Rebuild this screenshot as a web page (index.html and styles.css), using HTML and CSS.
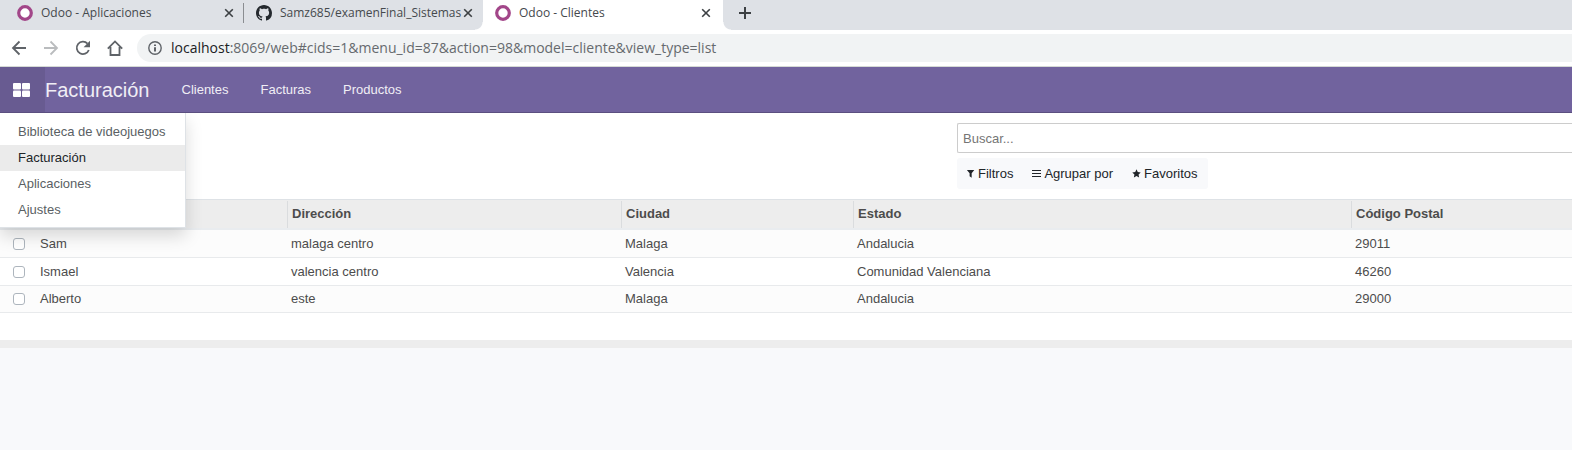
FILE: index.html
```html
<!DOCTYPE html>
<html lang="es">
<head>
<meta charset="utf-8">
<title>Odoo - Clientes</title>
<link rel="stylesheet" href="styles.css">
</head>
<body>
<header class="browser">
  <div class="tabs">
    <div class="tab tab-divided">
      <svg class="favicon" viewBox="0 0 16 16"><circle cx="8" cy="8" r="6.300" fill="#fff" stroke="#a24689" stroke-width="3.200"/></svg>
      <span class="tab-title">Odoo - Aplicaciones</span>
      <button class="tab-close" aria-label="Cerrar"><svg viewBox="0 0 10 10"><path d="M1.2 1.2 8.8 8.8M8.8 1.2 1.2 8.8"/></svg></button>
    </div>
    <div class="tab">
      <svg class="favicon" viewBox="0 0 16 16"><path fill="#24292e" d="M8 0C3.58 0 0 3.58 0 8c0 3.54 2.29 6.53 5.47 7.59.4.07.55-.17.55-.38 0-.19-.01-.82-.01-1.49-2.01.37-2.53-.49-2.69-.94-.09-.23-.48-.94-.82-1.13-.28-.15-.68-.52-.01-.53.63-.01 1.08.58 1.23.82.72 1.21 1.87.87 2.33.66.07-.52.28-.87.51-1.07-1.78-.2-3.64-.89-3.64-3.95 0-.87.31-1.59.82-2.15-.08-.2-.36-1.02.08-2.12 0 0 .67-.21 2.2.82.64-.18 1.32-.27 2-.27s1.36.09 2 .27c1.53-1.04 2.2-.82 2.2-.82.44 1.1.16 1.92.08 2.12.51.56.82 1.27.82 2.15 0 3.07-1.87 3.75-3.65 3.95.29.25.54.73.54 1.48 0 1.07-.01 1.93-.01 2.2 0 .21.15.46.55.38A8.01 8.01 0 0 0 16 8c0-4.42-3.58-8-8-8z"/></svg>
      <span class="tab-title">Samz685/examenFinal_Sistemas</span>
      <button class="tab-close" aria-label="Cerrar"><svg viewBox="0 0 10 10"><path d="M1.2 1.2 8.8 8.8M8.8 1.2 1.2 8.8"/></svg></button>
    </div>
    <div class="tab tab-active">
      <svg class="favicon" viewBox="0 0 16 16"><circle cx="8" cy="8" r="6.300" fill="#fff" stroke="#a24689" stroke-width="3.200"/></svg>
      <span class="tab-title">Odoo - Clientes</span>
      <button class="tab-close" aria-label="Cerrar"><svg viewBox="0 0 10 10"><path d="M1.2 1.2 8.8 8.8M8.8 1.2 1.2 8.8"/></svg></button>
    </div>
    <button class="tab-new" aria-label="Nueva pestaña"><svg viewBox="0 0 12 12"><path d="M6 0v12M0 6h12"/></svg></button>
  </div>
  <div class="toolbar">
    <button class="tool" aria-label="Atrás"><svg viewBox="0 0 16 16"><path d="M15 8H2M8.500 1.500 2 8l6.500 6.500"/></svg></button>
    <button class="tool tool-off" aria-label="Adelante" disabled><svg viewBox="0 0 16 16"><path d="M1 8h13M7.500 1.500 14 8l-6.500 6.500"/></svg></button>
    <button class="tool" aria-label="Recargar"><svg viewBox="0 0 16 16"><path d="M13.800 10A6.200 6.200 0 1 1 12.500 3.600"/><path class="solid" d="M15 .8v6.400H8.600z"/></svg></button>
    <button class="tool" aria-label="Inicio"><svg viewBox="0 0 16 16"><path d="M.8 8.600 8 1.400l7.200 7.200M3.500 7v8h9V7"/></svg></button>
    <div class="address">
      <svg class="info" viewBox="0 0 14 14"><circle cx="7" cy="7" r="6.200"/><path d="M7 6.200v4.300M7 3.500v1.600"/></svg>
      <div class="url"><span class="host">localhost</span>:8069/web#cids=1&amp;menu_id=87&amp;action=98&amp;model=cliente&amp;view_type=list</div>
    </div>
  </div>
</header>
<nav class="navbar">
  <div class="apps">
    <button class="apps-toggle" aria-label="Aplicaciones" aria-expanded="true"><svg viewBox="0 0 17 14"><rect width="8" height="6.500" rx="1"/><rect x="9" width="8" height="6.500" rx="1"/><rect y="7.500" width="8" height="6.500" rx="1"/><rect x="9" y="7.500" width="8" height="6.500" rx="1"/></svg></button>
    <div class="apps-menu">
      <a href="#">Biblioteca de videojuegos</a>
      <a href="#" class="current">Facturación</a>
      <a href="#">Aplicaciones</a>
      <a href="#">Ajustes</a>
    </div>
  </div>
  <a class="brand" href="#">Facturación</a>
  <a class="entry" href="#">Clientes</a>
  <a class="entry" href="#">Facturas</a>
  <a class="entry" href="#">Productos</a>
</nav>
<main>
  <section class="control-panel">
    <div class="search">
      <input class="search-box" type="text" placeholder="Buscar..." aria-label="Buscar">
      <div class="search-options">
        <button><svg viewBox="0 0 10 10"><path d="M1 1h8.200L6.300 4.700v5L4 8V4.700z"/></svg>Filtros</button>
        <button><svg viewBox="0 0 9 9"><path d="M0 1h9v1H0zM0 4h9v1H0zM0 7h9v1H0z"/></svg>Agrupar por</button>
        <button><svg viewBox="0 0 10 10"><path d="m5 .4 1.400 3 3.300.4-2.400 2.300.6 3.300L5 7.800 2.100 9.400l.6-3.300L.3 3.800l3.300-.4z"/></svg>Favoritos</button>
      </div>
    </div>
  </section>
  <section class="list">
    <table>
      <colgroup><col class="c-check"><col class="c-name"><col class="c-address"><col class="c-city"><col class="c-state"><col class="c-zip"></colgroup>
      <thead>
        <tr><th></th><th></th><th class="split">Dirección</th><th class="split">Ciudad</th><th class="split">Estado</th><th class="split">Código Postal</th></tr>
      </thead>
      <tbody>
        <tr><td><input type="checkbox" aria-label="Sam"></td><td>Sam</td><td>malaga centro</td><td>Malaga</td><td>Andalucia</td><td>29011</td></tr>
        <tr><td><input type="checkbox" aria-label="Ismael"></td><td>Ismael</td><td>valencia centro</td><td>Valencia</td><td>Comunidad Valenciana</td><td>46260</td></tr>
        <tr><td><input type="checkbox" aria-label="Alberto"></td><td>Alberto</td><td>este</td><td>Malaga</td><td>Andalucia</td><td>29000</td></tr>
      </tbody>
    </table>
  </section>
</main>
</body>
</html>
```
FILE: styles.css
```css
* { box-sizing: border-box; }
body {
  margin: 0;
  background: #f8f9fb;
  color: #4c4c4c;
  font: 13px/20px "Liberation Sans", Arial, sans-serif;
}
button { border: 0; padding: 0; background: none; font: inherit; color: inherit; }
a { color: inherit; text-decoration: none; }
svg { display: block; flex: none; }

.browser { font-family: "Open Sans", "Segoe UI", sans-serif; }
.tabs { display: flex; height: 30px; padding-left: 5px; background: #dee1e6; }
.tab {
  display: flex;
  align-items: center;
  width: 239px;
  padding: 0 10px 4px 12px;
  font-size: 12px;
  color: #45494d;
}
.tab-divided { background: linear-gradient(#8a8d91, #8a8d91) right 3px / 1px 20px no-repeat; }
.tab-active { position: relative; width: 240px; padding-right: 12px; background: #fff; }
.tab-active::before, .tab-active::after {
  content: "";
  position: absolute;
  bottom: 0;
  width: 8px;
  height: 8px;
}
.tab-active::before { right: 100%; background: radial-gradient(circle at 0 0, #dee1e6 7px, #fff 8px); }
.tab-active::after { left: 100%; background: radial-gradient(circle at 100% 0, #dee1e6 7px, #fff 8px); }
.favicon { width: 16px; height: 16px; margin-right: 8px; }
.tab-title { flex: 1; min-width: 0; white-space: nowrap; }
.tab-close { width: 10px; height: 10px; }
.tab-close svg { width: 10px; height: 10px; stroke: #3c4043; stroke-width: 1.6; }
.tab-new { padding: 0 0 4px 16px; }
.tab-new svg { width: 12px; height: 12px; stroke: #3c4043; stroke-width: 2; }

.toolbar {
  display: flex;
  align-items: center;
  gap: 16px;
  height: 37px;
  padding-left: 11px;
  background: #fff;
  border-bottom: 1px solid #d5dad5;
}
.tool svg { width: 16px; height: 16px; fill: none; stroke: #5f6368; stroke-width: 1.8; }
.tool .solid { fill: #5f6368; stroke: none; }
.tool-off svg { stroke: #babcbe; }
.address {
  display: flex;
  flex: 1;
  align-items: center;
  gap: 9px;
  height: 28px;
  margin-left: -2px;
  padding-left: 11px;
  border-radius: 14px 0 0 14px;
  background: #f1f3f4;
}
.info { width: 14px; height: 14px; fill: none; stroke: #5f6368; stroke-width: 2; }
.info circle { stroke-width: 1.4; }
.url { font-size: 14px; color: #666a6e; white-space: nowrap; }
.host { color: #202124; }

.navbar {
  display: flex;
  height: 46px;
  background: #71639e;
  border-bottom: 1px solid #5b4f80;
  color: #f0eef5;
  line-height: 45px;
}
.apps { position: relative; }
.apps-toggle { display: flex; align-items: center; height: 45px; padding: 0 15px 0 13px; background: #685b91; }
.apps-toggle svg { width: 17px; height: 14px; fill: #fff; }
.apps-menu {
  position: absolute;
  z-index: 2;
  top: 46px;
  left: 0;
  padding: 6px 0 4px;
  background: #fff;
  border: solid #dee2e6;
  border-width: 0 1px 1px 0;
  box-shadow: 0 8px 16px rgba(0, 0, 0, .15);
  clip-path: inset(0 -30px -30px 0);
  color: #5a5f64;
  line-height: 26px;
  white-space: nowrap;
}
.apps-menu a { display: block; padding: 0 20px 0 18px; }
.apps-menu .current { background: #ebebeb; color: #212529; }
.brand { margin-right: 16px; font-size: 20px; line-height: 46px; }
.entry { padding: 0 16px; }

.control-panel {
  display: flex;
  justify-content: flex-end;
  height: 87px;
  padding-top: 10px;
  background: #fff;
  border-bottom: 1px solid #dee2e6;
}
.search { display: flex; flex-direction: column; align-items: flex-start; gap: 5px; width: 615px; }
.search-box {
  width: 100%;
  height: 30px;
  padding: 0 5px;
  border: 1px solid #ccc;
  border-right: 0;
  border-radius: 2px 0 0 2px;
  font: inherit;
}
.search-box::placeholder { color: #757575; }
.search-options { display: flex; background: #f8f9fb; border-radius: 3px; color: #212529; }
.search-options button { display: flex; align-items: center; gap: 3px; height: 31px; padding: 0 10px 0 9px; }
.search-options svg { width: 9px; height: 9px; fill: #212529; }

.list { padding-bottom: 27px; background: #fff; border-bottom: 8px solid #ededed; }
table { width: 100%; border-collapse: separate; border-spacing: 0; table-layout: fixed; }
.c-check { width: 36px; }
.c-name { width: 251px; }
.c-address { width: 334px; }
.c-city { width: 232px; }
.c-state { width: 498px; }
th {
  height: 30px;
  padding: 0 5px;
  background: #ededed;
  border-bottom: 2px solid #e9ecef;
  text-align: left;
}
.split { background: linear-gradient(#dadcde, #dadcde) left 1px / 1px 100% no-repeat #ededed; }
td { height: 28px; padding: 0 4px; border-bottom: 1px solid #e8eaec; line-height: 20px; }
tbody tr:nth-child(odd) { background: #fcfcfc; }
tbody tr:last-child td { height: 27px; }
td:first-child { padding-left: 13px; }
input[type="checkbox"] {
  display: block;
  appearance: none;
  width: 12px;
  height: 12px;
  margin: 0;
  border: 1px solid #adb5bd;
  border-radius: 3px;
  background: #fff;
}
```
